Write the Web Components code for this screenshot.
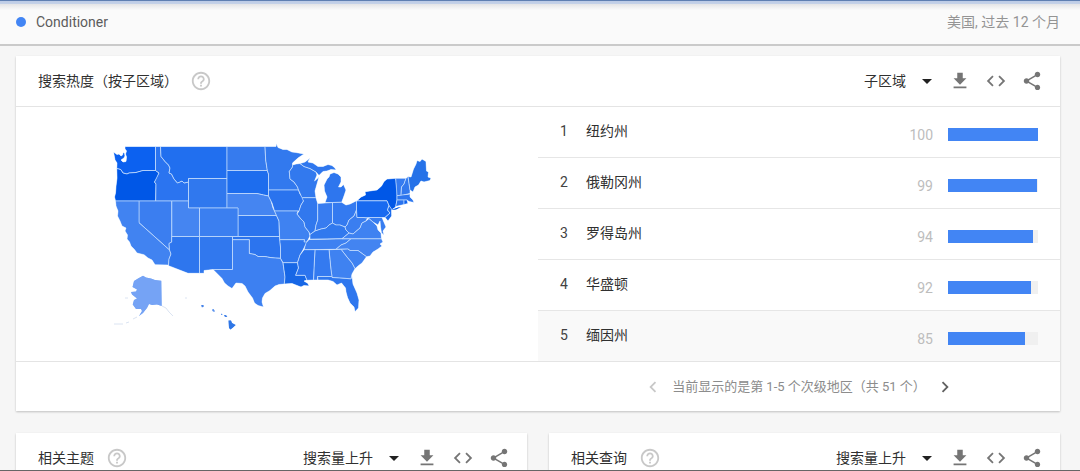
<!DOCTYPE html>
<html lang="zh-CN">
<head>
<meta charset="utf-8">
<title>Conditioner</title>
<style>
  body { margin: 0; background: #f6f6f6; color: #303030; font: 14px/20px Roboto, "Noto Sans CJK SC", sans-serif; }
</style>
</head>
<body>
<trends-app>
  <term-bar slot="bar" term="Conditioner">美国, 过去 12 个月</term-bar>
  <trend-card heading="搜索热度（按子区域）" choice="子区域" wide>
    <us-map></us-map>
    <region-ranking></region-ranking>
    <list-pager slot="footer">当前显示的是第 1-5 个次级地区（共 51 个）</list-pager>
  </trend-card>
  <trend-card heading="相关主题" choice="搜索量上升"></trend-card>
  <trend-card heading="相关查询" choice="搜索量上升"></trend-card>
</trends-app>

<script>
function define(name, render) {
  customElements.define(name, class extends HTMLElement {
    constructor() {
      super();
      this.attachShadow({ mode: "open" });
    }
    connectedCallback() {
      this.shadowRoot.innerHTML = render(this);
    }
  });
}

const ICONS = {
  help: '<path d="M11 18h2v-2h-2v2zm1-16C6.48 2 2 6.48 2 12s4.48 10 10 10 10-4.48 10-10S17.52 2 12 2zm0 18c-4.41 0-8-3.59-8-8s3.59-8 8-8 8 3.59 8 8-3.59 8-8 8zm0-14c-2.21 0-4 1.79-4 4h2c0-1.1.9-2 2-2s2 .9 2 2c0 2-3 1.75-3 5h2c0-2.25 3-2.5 3-5 0-2.21-1.79-4-4-4z"/>',
  download: '<path d="M19 9h-4V3H9v6H5l7 7 7-7zM5 18v2h14v-2H5z"/>',
  code: '<path d="M9.4 16.6L4.8 12l4.6-4.6L8 6l-6 6 6 6 1.4-1.4zm5.2 0l4.6-4.6-4.6-4.6L16 6l6 6-6 6-1.4-1.4z"/>',
  share: '<path d="M18 16.08c-.76 0-1.44.3-1.96.77L8.91 12.7c.05-.23.09-.46.09-.7s-.04-.47-.09-.7l7.05-4.11c.54.5 1.25.81 2.04.81 1.66 0 3-1.34 3-3s-1.34-3-3-3-3 1.34-3 3c0 .24.04.47.09.7L8.04 9.81C7.5 9.31 6.79 9 6 9c-1.66 0-3 1.34-3 3s1.34 3 3 3c.79 0 1.5-.31 2.04-.81l7.12 4.16c-.05.21-.08.43-.08.65 0 1.61 1.31 2.92 2.92 2.92s2.92-1.31 2.92-2.92-1.31-2.92-2.92-2.92z"/>',
  prev: '<path d="M15.41 7.41L14 6l-6 6 6 6 1.41-1.41L10.83 12z"/>',
  next: '<path d="M10 6L8.59 7.41 13.17 12l-4.58 4.59L10 18l6-6z"/>'
};
const BUTTON_CSS = `
  button { display: grid; place-items: center; margin: 0; padding: 0; border: 0; background: none; color: inherit; font: inherit; cursor: pointer; }
`;

define("svg-icon", el => `
  <style>
    :host { display: block; width: 22px; height: 22px; }
    svg { display: block; width: 100%; height: 100%; fill: currentColor; }
  </style>
  <svg viewBox="0 0 24 24" aria-hidden="true">${ICONS[el.getAttribute("name")]}</svg>`);

define("trends-app", () => `
  <style>
    :host { display: block; box-sizing: border-box; height: 100vh; overflow: hidden; border-top: 1px solid #5f7fb2; border-bottom: 1px solid #666; }
    main { display: grid; grid-template-columns: 1fr 1fr; gap: 22px; padding: 10px 20px 22px 16px; }
  </style>
  <slot name="bar"></slot>
  <main><slot></slot></main>`);

define("term-bar", el => `
  <style>
    :host { display: flex; align-items: center; justify-content: space-between; height: 41px; padding: 0 20px 2px 16px; border-bottom: 2px solid #cacaca;
      background: linear-gradient(#bccbe6 0, #c6d2e8 3px, #e4e4e6 3px, #fafafa 9px); }
    h1 { display: flex; align-items: center; gap: 10px; margin: 0; font: inherit; color: #5c5c5c; }
    h1::before { content: ""; width: 10px; height: 10px; border-radius: 50%; background: #4285f4; }
    p { margin: 0; color: #949494; }
  </style>
  <h1>${el.getAttribute("term")}</h1>
  <p><slot></slot></p>`);

define("trend-card", el => `
  <style>
    :host { display: block; background: #fff; box-shadow: 0 1px 2px rgba(0,0,0,.22); }
    :host([wide]) { grid-column: 1 / -1; }
    header { display: flex; align-items: center; height: 50px; padding: 0 17px 0 22px; border-bottom: 1px solid #e4e4e4; }
    h2 { margin: 0 12px 0 0; font: inherit; }
    ${BUTTON_CSS}
    .help { margin-right: auto; color: #c8c8c8; }
    label { display: inline-grid; align-items: center; margin-right: 17px; }
    select, label svg { grid-area: 1 / 1; }
    select { appearance: none; margin: 0; padding: 0 26px 0 0; border: 0; background: none; color: inherit; font: inherit; cursor: pointer; }
    label svg { justify-self: end; width: 10px; height: 5px; pointer-events: none; }
    .tools { display: flex; gap: 14px; color: #757575; }
    .body { display: grid; grid-template-columns: 1fr 1fr; }
  </style>
  <header>
    <h2>${el.getAttribute("heading")}</h2>
    <button class="help" aria-label="帮助"><svg-icon name="help"></svg-icon></button>
    <label>
      <select aria-label="${el.getAttribute("heading")}"><option>${el.getAttribute("choice")}</option></select>
      <svg viewBox="0 0 10 5" aria-hidden="true"><path d="M0 0h10L5 5z" fill="#212121"/></svg>
    </label>
    <div class="tools">
      <button aria-label="下载"><svg-icon name="download"></svg-icon></button>
      <button aria-label="嵌入"><svg-icon name="code"></svg-icon></button>
      <button aria-label="分享"><svg-icon name="share"></svg-icon></button>
    </div>
  </header>
  <div class="body"><slot></slot></div>
  <slot name="footer"></slot>`);

const REGIONS = [["纽约州", 100], ["俄勒冈州", 99], ["罗得岛州", 94], ["华盛顿", 92], ["缅因州", 85]];
define("region-ranking", () => `
  <style>
    :host { display: block; }
    table { width: 100%; border-collapse: separate; border-spacing: 0; table-layout: fixed; }
    td { box-sizing: border-box; height: 51px; padding: 14px 0 0; border-bottom: 1px solid #e6e6e6; vertical-align: top; }
    tr:last-child td { height: 50px; border-bottom: 0; background: #f9f9f9; }
    .rank { width: 48px; padding-left: 22px; color: #424242; }
    .value { width: 60px; padding-top: 18px; text-align: right; color: #bdbdbd; }
    .bar { width: 127px; padding: 21px 22px 0 15px; }
    .track { height: 13px; background: #f0f0f0; }
    .fill { height: 100%; background: #4285f4; }
  </style>
  <table><tbody>${REGIONS.map(([name, value], i) => `
    <tr>
      <td class="rank">${i + 1}</td>
      <td>${name}</td>
      <td class="value">${value}</td>
      <td class="bar"><div class="track"><div class="fill" style="width:${value}%"></div></div></td>
    </tr>`).join("")}
  </tbody></table>`);

define("list-pager", () => `
  <style>
    :host { display: grid; grid-template-columns: 1fr 1fr; border-top: 1px solid #e4e4e4; }
    nav { grid-column: 2; display: flex; align-items: center; justify-content: center; gap: 7px; height: 49px; font-size: 13px; color: #8c8c8c; }
    p { margin: 0; }
    ${BUTTON_CSS}
    button { width: 24px; height: 24px; color: #616161; }
    button:disabled { color: #c8c8c8; cursor: default; }
  </style>
  <nav aria-label="分页">
    <button disabled aria-label="上一页"><svg-icon name="prev"></svg-icon></button>
    <p><slot></slot></p>
    <button aria-label="下一页"><svg-icon name="next"></svg-icon></button>
  </nav>`);

// Outline and shade of each state, in the units of the map's viewBox.
const STATES = [
  ["WA", "#0c61f0", "113.5,152 115,153 117,154.5 119,154 121,156 122.5,155 123,152.5 124.5,153 125,156 124,158 121,160 123,162 126,161.5 126.5,157 125.5,154 126.5,151 125,149 125,146.5 155.5,146.5 155.5,170.5 143,170.5 136,172.5 129,173 127,174 123,173 120.7,169.5 116.7,168.5 117,163 115,160"],
  ["OR", "#0057e7", "116.7,168.5 120.7,169.5 123,173 127,174 129,173 136,172.5 143,170.5 155.5,170.5 159,173 157,178 154.5,182 156,184 155.7,201 115.5,201 114.5,197 115.5,193 116,186 117,178"],
  ["ID", "#2b74f0", "155.5,146.5 160.5,146.5 161,156.5 165,161.5 168.5,165 170,168 169,173 171.5,174 174,179 177.5,183 182,181 184,183 188.5,182 188.5,201 155.7,201 156,184 154.5,182 159,173 155.5,170.5"],
  ["MT", "#216fef", "160.5,146.5 227,146.5 227,178.5 188.5,178.5 188.5,182 184,183 182,181 177.5,183 174,179 171.5,174 169,173 170,168 168.5,165 165,161.5 161,156.5"],
  ["WY", "#3078ee", "188.5,178.5 227,178.5 227,208 188.5,208"],
  ["ND", "#367bee", "227,146.5 265,146.5 265.7,160 267.3,170.5 227,170.5"],
  ["SD", "#1d6dee", "227,170.5 267.3,170.5 268.5,174 268.5,196 263.5,195 257,193.5 227,193.5"],
  ["NE", "#4585f1", "227,193.5 257,193.5 263.5,195 268.5,196 271,201 273,208 275,212 276.5,215.5 238,215.5 238,208 227,208"],
  ["KS", "#2c74ee", "238,215.5 276.5,215.5 279,221 279.5,236.5 238,236.5"],
  ["CO", "#3b7ff0", "199.5,208 238,208 238,236.5 199.5,236.5"],
  ["UT", "#4585f1", "171.7,201 188.5,201 188.5,208 199.5,208 199.5,236.5 171.7,236.5"],
  ["NV", "#3b7ef0", "139,201 171.7,201 171.7,242 169,243.5 169.5,250 139,222.7"],
  ["CA", "#4183f1", "115.5,201 139,201 139,222.7 169.5,250 171,254 169,259 168.5,265 155,264.7 152,260 148,258 144,254.7 137,253 134,249 131,246 129.5,242 127,239 127.5,235 125,231 126,228 122,226 120,221 117.5,216 118,211 116,206"],
  ["AZ", "#2e76ee", "171.7,236.5 199.5,236.5 199.5,273.3 188,273.3 168.5,265.7 169,259 171,254 169.5,250 169,243.5 171.7,242"],
  ["NM", "#3178ee", "199.5,236.5 232.5,236.5 232.5,269.5 213,269.5 204,270.5 204,273.3 199.5,273.3"],
  ["OK", "#2c74ee", "232.5,236.5 279.5,236.5 280.5,247 280.5,258.3 275,258 270,257.5 265,256.5 258,256.5 255,254.5 249.3,253.5 249.3,239.7 232.5,239.7"],
  ["TX", "#3d80f1", "232.5,239.7 249.3,239.7 249.3,253.5 255,254.5 258,256.5 265,256.5 270,257.5 275,258 280.5,258.3 283,263 284,270 285,277 284.3,284 279,284.5 275,286 270,290.5 265,293.5 262.5,298 262,302 263.5,307 258,305.5 254.5,303 252.5,298 248,292 245,286 242,283.5 236,283 232,288.5 228,286 224.5,283 222,278.5 213,269.5 232.5,269.5"],
  ["MN", "#3279ee", "265,146.5 276,146.5 276.5,143.5 278,147.5 283,149.5 287,149.5 292,152 296,152.5 304,154 298,158 292.5,163 292.5,167 289.3,171.5 290,179 294,182 297.5,187 298.5,190 268.5,190 268.5,174 267.3,170.5 265.7,160"],
  ["IA", "#2a73ee", "268.5,190 298.5,190 300,194 303,198 303.5,201 301,205 299,211 274.5,211 272,203 268.5,196"],
  ["MO", "#3f82f1", "274.5,211 298,211 297,214 301,219 304,222 305,227 309,232 310,236 308,240 306,243 304,242 304.5,239.7 279.7,239.7 279,221 276.5,215.5"],
  ["AR", "#2f77ee", "279.7,239.7 304.5,239.7 304,242 307,242 303,250 300,255 297.5,262.7 283,262.7 280.5,258.3 280.5,247"],
  ["LA", "#1767e6", "283,262.7 297.5,262.7 298.5,268 295.7,275.3 305,275.3 307,280 304,281 308,283.5 309,286 304,285.5 301,287 297,285.5 292,283.5 284.3,284 285,277 284,270"],
  ["WI", "#3279ee", "292.5,165 296,164 300,163.5 304,166.5 310,168.5 316,172 317,175 314.5,181 319,177 317,184 315,191 316,197.7 302,197.7 298.5,190 297.5,187 294,182 290,179 289.3,171.5 292.5,167"],
  ["UP", "#2f77ee", "300,163.5 305,162 310,158 308,162 313,163 318,166.5 323,166.5 328,164.5 332,165.5 335,168 336,170 331,169.5 327,171 323,171.5 319,175.5 316,172 310,168.5 304,166.5"],
  ["MI", "#2e76ee", "325,202.5 327,197 324.5,191 324,185 327,179 329,177 330,174 334,172.5 338,174 341,177 341,182 338.5,187 341,187 343.5,184.5 346,190 344,196 341.7,202.3 332.5,202.5"],
  ["IL", "#3178ee", "302,197.7 316,197.7 317.7,203.5 317.7,220 316,225 315,231 310,234.5 309,232 305,227 304,222 301,219 297,214 299,211 301,205 303.5,201"],
  ["IN", "#387cf0", "317.7,203.5 332.5,202.5 332.5,223 329,225 326,228 321,229 315,231 316,225 317.7,220"],
  ["OH", "#347af0", "332.5,202.5 341.7,202.3 346,205 350,204 356.5,200.7 356.5,210 354,216 349,220 347,225 345,227 340,225 336,225 332.5,223"],
  ["KY", "#3179ee", "315,231 321,229 326,228 329,225 332.5,223 336,225 340,225 345,227 346,230 349,233 342,238.7 310,239.2 310,234.5"],
  ["TN", "#3e81f1", "309,239.5 351,238.7 346,243 341,245 336,249.3 304,249.7 306,243"],
  ["NC", "#4384f1", "351,238.7 381.5,238.7 383,242 380,244 382,246 378,249 373,252 370,256 366.5,256.7 358,250.5 350,250.5 348,249 336,249.3 341,245 346,243"],
  ["SC", "#3f82f1", "341,249.3 348,249 350,250.5 358,250.5 366.5,256.7 362,263 358,266 355,268.7 352,263 347,257"],
  ["GA", "#3f82f1", "329,249.7 341,249.3 347,257 352,263 355,268.7 352,274 351,279 347,278.5 332,277.5 331,270"],
  ["AL", "#347af0", "315,249.7 329,249.7 331,270 332,276.5 317.5,276.5 317.5,280 313.5,280 314,268"],
  ["MS", "#2c74ee", "304,249.7 315,249.7 314,268 313.5,280 307,280.3 305,275.3 295.7,275.3 298.5,268 297.5,262.7 300,255"],
  ["FL", "#2f77ee", "317.5,276.5 332,276.5 332,277.5 347,278.5 351,279 352,275.5 353,284 357,293 359,300 358.5,308 355,311.7 354,307 350,303 347.5,297.5 346,292 345.5,288 341.5,283 337,285 333,281.5 328,280 318,280"],
  ["WV", "#3a7ef0", "356.5,210 357,217.5 364,217.5 368,217 366,221 362,223 360,228 357,230.5 353,234 349,233 346,230 345,227 347,225 349,220 354,216"],
  ["VA", "#3f82f1", "342,238.7 349,233 353,234 357,230.5 360,228 362,223 366,221 369,218.5 373,222 377,226 378,230 381,233 381.5,238.7"],
  ["MD", "#387df0", "364,217.5 382,217.5 386,227 383,231 384,235 381.5,233 380.5,227 380,221 378,225 373,222 369,218.5"],
  ["PA", "#196af0", "356.5,200.7 387,200.7 389,205.5 387.5,210 390,213 385,217.5 357,217.5 356.5,210"],
  ["NY", "#0057e7", "357,200.7 361,197 365.5,195 365,191.7 373,190.5 377,190 381.5,186 384,181.5 387,179 395.7,178.3 397,189 397,200 395.7,207 391.5,210 389,205.5 387,200.7"],
  ["LI", "#0057e7", "391,210 398,207.5 401,207 396,209.5"],
  ["NJ", "#1a6aec", "389,205.5 391.5,209 391.7,216 388,221 385,217.5 390,213 387.5,210"],
  ["VT", "#357bf0", "395.7,178.3 406,178.3 404,184 401.5,187 401,195.5 397,195.7"],
  ["NH", "#3279ee", "406,178.3 408,176.5 410,190 410,193.5 401,195.5 401.5,187 404,184"],
  ["MA", "#2e76ee", "397,195.7 410,194 410,197 413,200 414,202.5 409,201.5 407,200 397,200"],
  ["CT", "#2a73ee", "397,200 404,200 404,204.5 395.7,206.5"],
  ["RI", "#0c61f0", "404,200 407,200 408,203.5 404,204.5"],
  ["ME", "#2672e8", "408,176.5 411,177 413.5,169 416,164 417,160.5 420,161.5 422,159 426,161.5 426.5,171 428.5,172 428,177 431,178 430,180.5 424,182 421,181 418.5,185 415,187 413,192 410,190"],
  ["AK", "#75a3f5", "134,281 138,278.5 143,275.7 146,277.5 151,278.5 155,280 161.3,280.7 161.7,306 157,304.5 152,305 149,304 147,308 143,313 139,316 142,311 141,309 136,309 132.7,304.5 134,300 137,298.5 132,294.5 131,292 136,291.5 137,289.5 132.5,287"],
  ["HI1", "#4582e8", "201.3,305 203.5,305 203.5,307 201.8,307.3"],
  ["HI2", "#5a90ec", "212,309.7 213.5,309 215,311.5 213,311.5"],
  ["HI3", "#5a90ec", "221,313.7 222.5,314 222,315 221,314.7"],
  ["HI4", "#4582e8", "224,315 226,315 227.3,317 225,317"],
  ["HI5", "#2f76e6", "228.5,320.5 231,320.5 232,323 235.7,325 233,327.5 230.5,329.5 229,328"]
];
define("us-map", () => `
  <style>
    :host { display: block; }
    svg { display: block; width: 100%; height: auto; }
    .states { stroke: #a8cbfb; stroke-width: .8; stroke-linejoin: round; }
    .islands { stroke: none; }
  </style>
  <svg viewBox="16 107 522 254" role="img" aria-label="美国">
    <defs><mask id="land"><g fill="#fff">${STATES.map(s => `<polygon points="${s[2]}"/>`).join("")}</g></mask></defs>
    <g class="states" mask="url(#land)">${STATES.map(([id, shade, points]) => `<polygon id="${id}" fill="${shade}" points="${points}"/>`).join("")}</g>
    <g class="islands">${STATES.filter(s => /^(HI|AK|LI)/.test(s[0])).map(([, shade, points]) => `<polygon fill="${shade}" points="${points}"/>`).join("")}</g>
    <path d="M162 306l4 2 3 4 4 4M137 317l-4 2M129 322l-3 1M114 324h9M125 298h3M185 298h2" fill="none" stroke="#dbe4f2"/>
  </svg>`);
</script>
</body>
</html>
